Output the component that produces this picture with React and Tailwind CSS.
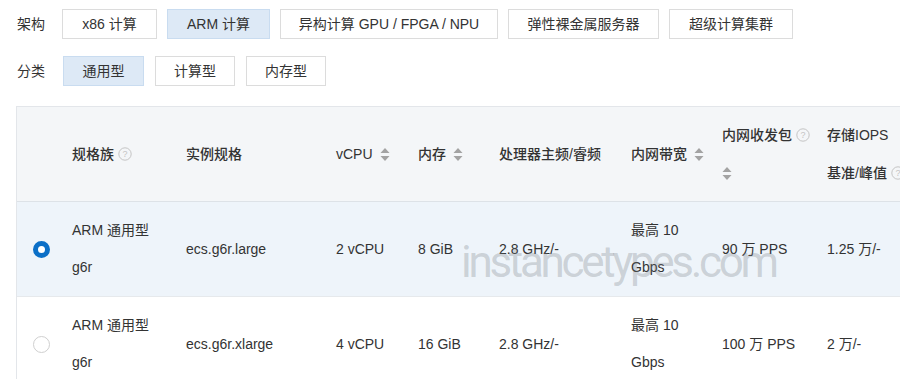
import React from 'react'

const font = { fontFamily: '"Liberation Sans", "Noto Sans CJK SC", sans-serif' }

const FilterButton = ({ text, active, w }) => (
  <div className={`${w} h-[30px] flex items-center justify-center border text-[14px] text-[#333] ${active ? 'bg-[#dde9f6] border-[#c9dcf0]' : 'bg-white border-[#dcdcdc]'}`}>
    {text}
  </div>
)

const Help = () => (
  <svg width="14" height="14" viewBox="0 0 14 14" className="shrink-0">
    <circle cx="7" cy="7" r="6.2" fill="none" stroke="#c4c4c4" strokeWidth="1" />
    <text x="7" y="10.3" textAnchor="middle" fontSize="9" fill="#c4c4c4" fontFamily="Liberation Sans, sans-serif">?</text>
  </svg>
)

const Sort = () => (
  <svg width="10" height="15" viewBox="0 0 10 15" className="shrink-0">
    <path d="M5 1 L9.5 6 L0.5 6 Z" fill="#a3a3a3" />
    <path d="M0.5 9 L9.5 9 L5 14 Z" fill="#a3a3a3" />
  </svg>
)

const Radio = ({ checked }) =>
  checked ? (
    <div className="w-[17px] h-[17px] rounded-full border-[5px] border-[#0b6fc7] bg-white" />
  ) : (
    <div className="w-[17px] h-[17px] rounded-full border border-[#cfcfcf] bg-white" />
  )

const cols = 'grid grid-cols-[55px_114px_150px_82px_81px_132px_91px_105px_1fr]'

const rows = [
  { checked: true, spec: 'ecs.g6r.large', cpu: '2 vCPU', mem: '8 GiB', pps: '90 万 PPS', iops: '1.25 万/-' },
  { checked: false, spec: 'ecs.g6r.xlarge', cpu: '4 vCPU', mem: '16 GiB', pps: '100 万 PPS', iops: '2 万/-' },
]

export default function App() {
  return (
    <div style={font} className="relative w-[900px] h-[379px] overflow-hidden bg-white text-[#333]">
      <div className="flex items-center pl-[17px] mt-[9px]">
        <span className="w-[45px] text-[14px]">架构</span>
        <div className="flex gap-[10px]">
          <FilterButton w="w-[95px]" text="x86 计算" />
          <FilterButton w="w-[103px]" text="ARM 计算" active />
          <FilterButton w="w-[218px]" text="异构计算 GPU / FPGA / NPU" />
          <FilterButton w="w-[151px]" text="弹性裸金属服务器" />
          <FilterButton w="w-[124px]" text="超级计算集群" />
        </div>
      </div>
      <div className="flex items-center pl-[17px] mt-[17px]">
        <span className="w-[46px] text-[14px]">分类</span>
        <div className="flex gap-[11px]">
          <FilterButton w="w-[81px]" text="通用型" active />
          <FilterButton w="w-[80px]" text="计算型" />
          <FilterButton w="w-[80px]" text="内存型" />
        </div>
      </div>

      <div className="ml-[16px] mt-[20px] w-[884px] border-l border-t border-[#e3e6ea]">
        <div className={`${cols} h-[95px] bg-[#f4f6f8] border-b border-[#dde2e7] items-center text-[14px] font-medium whitespace-nowrap`}>
          <div />
          <div className="flex items-center gap-[4px]">规格族 <Help /></div>
          <div>实例规格</div>
          <div className="flex items-center gap-[7px]">vCPU <Sort /></div>
          <div className="flex items-center gap-[7px]">内存 <Sort /></div>
          <div>处理器主频/睿频</div>
          <div className="flex items-center gap-[7px]">内网带宽 <Sort /></div>
          <div className="flex flex-col leading-[38px]">
            <div className="flex items-center gap-[4px]">内网收发包 <Help /></div>
            <div className="flex items-center h-[38px]"><Sort /></div>
          </div>
          <div className="flex flex-col leading-[38px]">
            <div>存储IOPS</div>
            <div className="flex items-center gap-[4px]">基准/峰值 <Help /></div>
          </div>
        </div>

        {rows.map((r) => (
          <div key={r.spec} className={`${cols} h-[95px] items-center text-[14px] border-b border-[#e6e9ec] whitespace-nowrap ${r.checked ? 'bg-[#eef4fa]' : 'bg-white'}`}>
            <div className="pl-[16px] flex items-center"><Radio checked={r.checked} /></div>
            <div className="flex flex-col leading-[37px]">
              <span>ARM 通用型</span>
              <span>g6r</span>
            </div>
            <div>{r.spec}</div>
            <div>{r.cpu}</div>
            <div>{r.mem}</div>
            <div>2.8 GHz/-</div>
            <div className="flex flex-col leading-[37px]">
              <span>最高 10</span>
              <span>Gbps</span>
            </div>
            <div>{r.pps}</div>
            <div>{r.iops}</div>
          </div>
        ))}
      </div>

      <div
        className="absolute left-[461px] top-[240px] text-[44px] leading-none font-normal tracking-[-3.3px] text-[rgba(120,126,132,0.3)] pointer-events-none"
        style={{ fontFamily: 'Roboto, sans-serif' }}
      >
        instancetypes.com
      </div>
    </div>
  )
}
